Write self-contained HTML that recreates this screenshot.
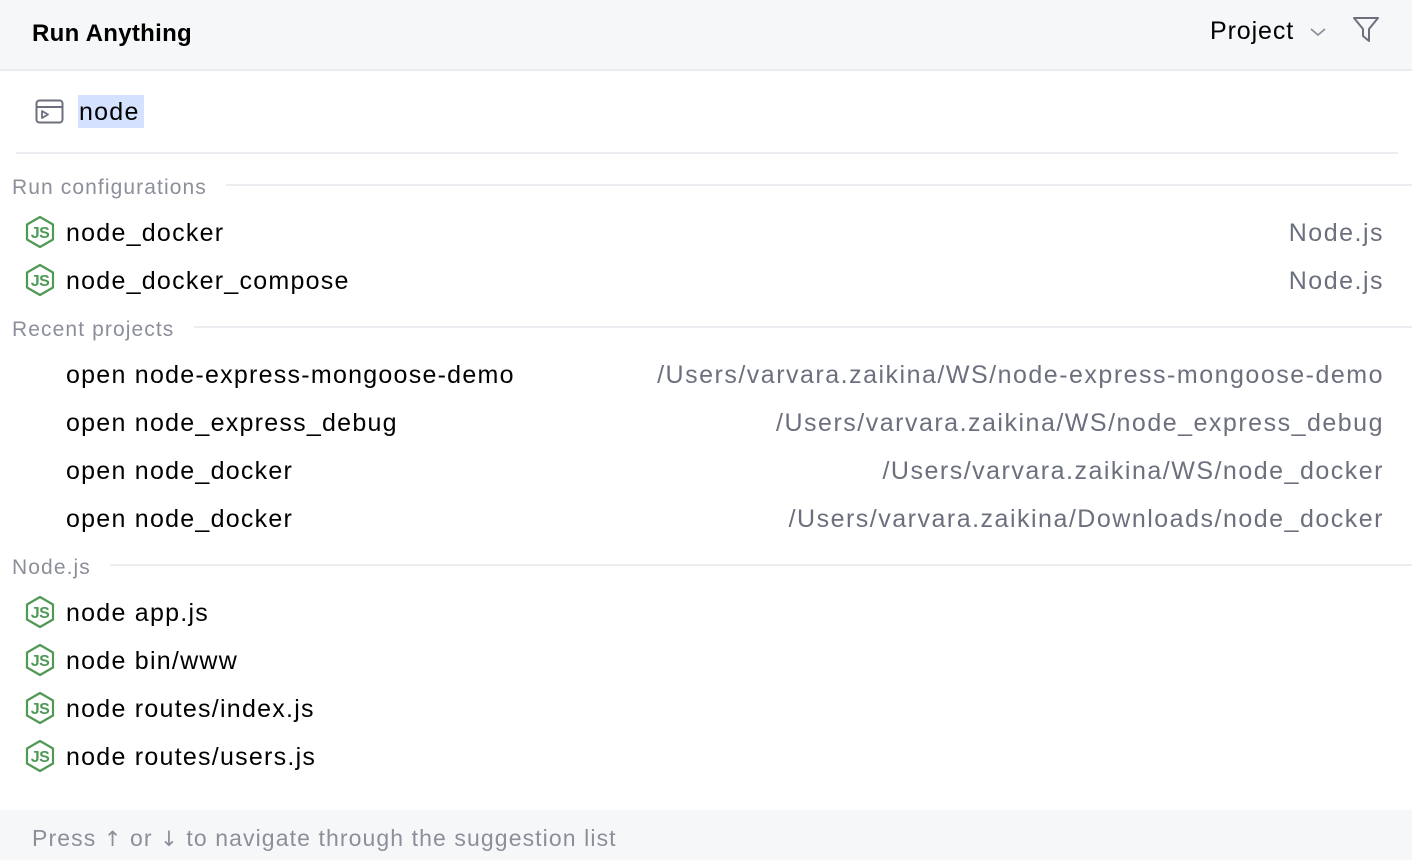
<!DOCTYPE html>
<html><head><meta charset="utf-8"><style>
*{margin:0;padding:0;box-sizing:border-box}
body{width:1412px;height:860px;background:#fff;font-family:"Liberation Sans",Arial,sans-serif;position:relative;overflow:hidden;color:#000}
.a{position:absolute;white-space:nowrap;line-height:1}
.hdr{position:absolute;left:0;top:0;width:1412px;height:71px;background:#f6f7f9;border-bottom:2px solid #ebecf0}
.t{font-size:25px;letter-spacing:1.25px}
.g{color:#6c707e;letter-spacing:1.5px}
.sec{font-size:21px;color:#8c8f99;letter-spacing:1.1px}
.ln{position:absolute;height:2px;background:#ebecf0}
.ic{position:absolute;left:24px;width:32px;height:34px}
.ft{position:absolute;left:0;top:810px;width:1412px;height:50px;background:#f6f7f9}
</style></head><body>
<div class="hdr"></div>
<div class="a" style="left:32px;top:22px;font-size:24px;font-weight:bold;letter-spacing:0.3px">Run Anything</div>
<div class="a t" style="left:1210px;top:19px;letter-spacing:0.9px">Project</div>
<svg class="a" style="left:1308px;top:24px" width="20" height="16"><path d="M3 5 L10 11 L17 5" fill="none" stroke="#8c8f99" stroke-width="1.8"/></svg>
<svg class="a" style="left:1352px;top:16px" width="28" height="28"><path d="M2 2 H26 L17 13 V25 L11 20 V13 Z" fill="none" stroke="#6c707e" stroke-width="2" stroke-linejoin="round"/></svg>

<svg class="a" style="left:35px;top:99px" width="30" height="26"><rect x="1.5" y="1.5" width="26" height="22" rx="3" fill="none" stroke="#6c707e" stroke-width="2"/><line x1="1.5" y1="8" x2="27.5" y2="8" stroke="#6c707e" stroke-width="2"/><path d="M7 12 L13 15.5 L7 19 Z" fill="none" stroke="#6c707e" stroke-width="1.8" stroke-linejoin="round"/></svg>
<div class="a" style="left:78px;top:95px;width:66px;height:33px;background:#d4e2ff"></div>
<div class="a t" style="left:79px;top:100px">node</div>
<div class="ln" style="left:16px;top:152px;width:1382px"></div>

<div class="a sec" style="left:12px;top:177px">Run configurations</div>
<div class="ln" style="left:226px;top:184px;width:1186px"></div>

<div class="a sec" style="left:12px;top:319px">Recent projects</div>
<div class="ln" style="left:194px;top:326px;width:1218px"></div>

<div class="a sec" style="left:12px;top:557px">Node.js</div>
<div class="ln" style="left:110px;top:564px;width:1302px"></div>

<svg width="0" height="0" style="position:absolute"><defs><g id="js"><polygon points="16,2 29,9.5 29,24.5 16,32 3,24.5 3,9.5" fill="none" stroke="#4e9a55" stroke-width="2.2" stroke-linejoin="round"/><text x="16" y="23" text-anchor="middle" font-family="Liberation Sans,sans-serif" font-size="16" font-weight="bold" fill="#4e9a55" letter-spacing="-0.5">JS</text></g></defs></svg>

<div class="a t" style="left:66px;top:221px">node_docker</div>
<div class="a t g" style="right:28px;top:221px">Node.js</div>
<div class="a t" style="left:66px;top:269px">node_docker_compose</div>
<div class="a t g" style="right:28px;top:269px">Node.js</div>

<div class="a t" style="left:66px;top:363px">open node-express-mongoose-demo</div>
<div class="a t g" style="right:28px;top:363px">/Users/varvara.zaikina/WS/node-express-mongoose-demo</div>
<div class="a t" style="left:66px;top:411px">open node_express_debug</div>
<div class="a t g" style="right:28px;top:411px">/Users/varvara.zaikina/WS/node_express_debug</div>
<div class="a t" style="left:66px;top:459px">open node_docker</div>
<div class="a t g" style="right:28px;top:459px">/Users/varvara.zaikina/WS/node_docker</div>
<div class="a t" style="left:66px;top:507px">open node_docker</div>
<div class="a t g" style="right:28px;top:507px">/Users/varvara.zaikina/Downloads/node_docker</div>

<div class="a t" style="left:66px;top:601px">node app.js</div>
<div class="a t" style="left:66px;top:649px">node bin/www</div>
<div class="a t" style="left:66px;top:697px">node routes/index.js</div>
<div class="a t" style="left:66px;top:745px">node routes/users.js</div>

<svg class="ic" style="top:215px" viewBox="0 0 32 34"><use href="#js"/></svg>
<svg class="ic" style="top:263px" viewBox="0 0 32 34"><use href="#js"/></svg>
<svg class="ic" style="top:595px" viewBox="0 0 32 34"><use href="#js"/></svg>
<svg class="ic" style="top:643px" viewBox="0 0 32 34"><use href="#js"/></svg>
<svg class="ic" style="top:691px" viewBox="0 0 32 34"><use href="#js"/></svg>
<svg class="ic" style="top:739px" viewBox="0 0 32 34"><use href="#js"/></svg>

<div class="ft"></div>
<div class="a" style="left:32px;top:827px;font-size:23px;color:#8c8f99;letter-spacing:1.1px">Press <span style="font-family:'DejaVu Sans',sans-serif;font-size:21px">↑</span> or <span style="font-family:'DejaVu Sans',sans-serif;font-size:21px">↓</span> to navigate through the suggestion list</div>
</body></html>
